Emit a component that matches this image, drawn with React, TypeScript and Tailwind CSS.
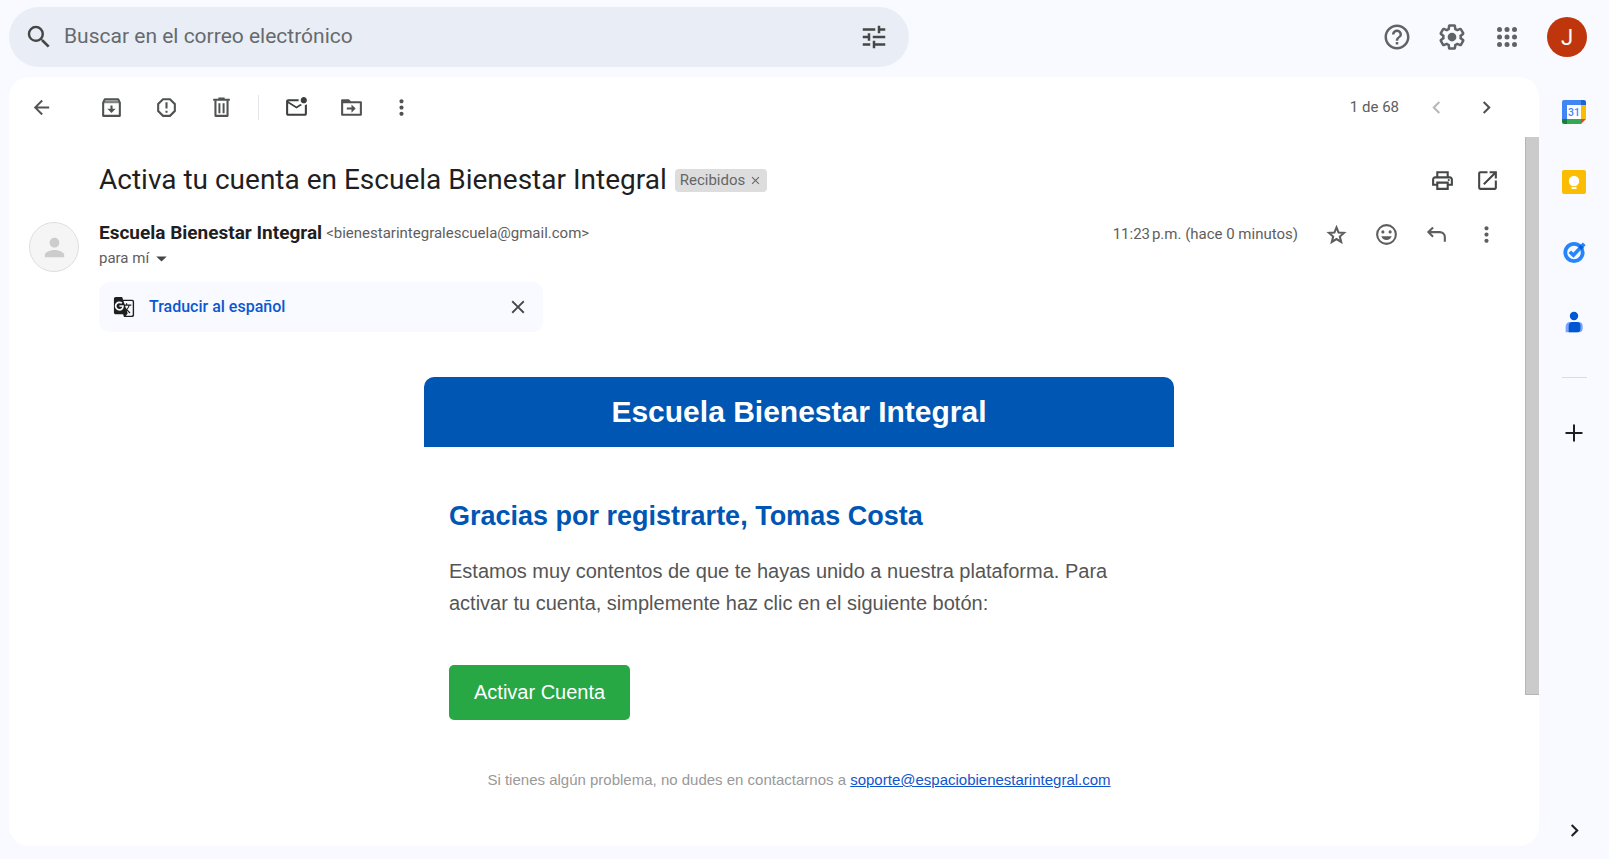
import type { ReactNode } from "react";
import {
  MdArrowBack,
  MdArrowDropDown,
  MdChevronLeft,
  MdChevronRight,
  MdClose,
  MdGTranslate,
  MdHelpOutline,
  MdMoreVert,
  MdOpenInNew,
  MdOutlineMarkEmailUnread,
  MdOutlinePrint,
  MdPerson,
  MdReportGmailerrorred,
  MdSearch,
  MdTune,
} from "react-icons/md";

function IconButton({
  label,
  className = "w-[50px]",
  children,
}: {
  label: string;
  className?: string;
  children: ReactNode;
}) {
  return (
    <button
      type="button"
      aria-label={label}
      className={`flex h-10 shrink-0 items-center justify-center ${className}`}
    >
      {children}
    </button>
  );
}

function GearIcon() {
  return (
    <svg viewBox="0 0 24 24" className="size-[30px]" fill="currentColor">
      <path d="M13.85 22.25h-3.7c-.74 0-1.36-.54-1.45-1.27l-.27-1.89c-.27-.14-.53-.29-.79-.46l-1.8.72c-.7.26-1.47-.03-1.81-.65L2.2 15.53c-.35-.66-.2-1.44.36-1.88l1.53-1.19c-.01-.15-.02-.3-.02-.46 0-.15.01-.31.02-.46l-1.52-1.19c-.59-.45-.74-1.26-.37-1.88l1.85-3.19c.34-.62 1.11-.9 1.79-.63l1.81.73c.26-.17.52-.32.78-.46l.27-1.91c.09-.7.71-1.25 1.44-1.25h3.7c.74 0 1.36.54 1.45 1.27l.27 1.89c.27.14.53.29.79.46l1.8-.72c.71-.26 1.48.03 1.82.65l1.84 3.18c.36.66.2 1.44-.36 1.88l-1.52 1.19c.01.15.02.3.02.46s-.01.31-.02.46l1.52 1.19c.56.45.72 1.23.37 1.86l-1.86 3.22c-.34.62-1.11.9-1.8.63l-1.8-.72c-.26.17-.52.32-.78.46l-.27 1.91c-.1.68-.72 1.22-1.46 1.22zm-3.23-2h2.76l.37-2.55.53-.22c.44-.18.88-.44 1.34-.78l.45-.34 2.38.96 1.38-2.4-2.03-1.58.07-.56c.03-.26.06-.51.06-.78s-.03-.53-.06-.78l-.07-.56 2.03-1.58-1.39-2.4-2.39.96-.45-.35c-.42-.32-.87-.58-1.33-.77l-.52-.22-.37-2.55h-2.76l-.37 2.55-.53.21c-.44.19-.88.44-1.34.79l-.45.33-2.38-.95-1.39 2.39 2.03 1.58-.07.56a7 7 0 0 0-.06.79c0 .26.02.53.06.78l.07.56-2.03 1.58 1.38 2.4 2.39-.96.45.35c.43.33.86.58 1.33.77l.53.22.38 2.55z" />
      <circle cx="12" cy="12" r="3.5" />
    </svg>
  );
}

function AppsIcon() {
  return (
    <svg viewBox="0 0 24 24" className="size-[30px]" fill="currentColor">
      {[6, 12, 18].map((y) => [6, 12, 18].map((x) => <circle key={`${x}-${y}`} cx={x} cy={y} r="2" />))}
    </svg>
  );
}

function ArchiveIcon() {
  return (
    <svg viewBox="0 0 24 24" className="size-[25px]" fill="none" stroke="currentColor" strokeWidth="2">
      <path d="M4 7.300 5.600 4h12.800L20 7.300V20H4z" strokeLinejoin="round" />
      <path d="M4 6.500h16" strokeWidth="2.600" opacity=".7" />
      <path d="M12 10v4.500" />
      <path d="M8 13.300h8l-4 4z" fill="currentColor" stroke="none" />
    </svg>
  );
}

function TrashIcon() {
  return (
    <svg viewBox="0 0 24 24" className="size-[25px]" fill="none" stroke="currentColor" strokeWidth="2">
      <path d="M4 4.500h16M9 3.500h6" />
      <path d="M6.200 5v15h11.600V5" strokeLinejoin="round" />
      <path d="M10 8v9.500M14 8v9.500" strokeWidth="1.900" />
    </svg>
  );
}

function MoveIcon() {
  return (
    <svg viewBox="0 0 24 24" className="size-[25px]" fill="none" stroke="currentColor" strokeWidth="2">
      <path d="M3 5h6l2 2h10v12H3z" strokeLinejoin="round" />
      <path d="M3 5h6l2 2v1H3z" fill="currentColor" stroke="none" />
      <path d="M7.500 13h6" />
      <path d="M12 9l4 4-4 4z" fill="currentColor" stroke="none" />
    </svg>
  );
}

function StarIcon() {
  return (
    <svg viewBox="0 0 24 24" className="size-[25px]" fill="none" stroke="currentColor" strokeWidth="2">
      <path d="M12 5.200l2 4.900 5.200.4-4 3.500 1.300 5.200L12 16.400l-4.500 2.800 1.300-5.200-4-3.500 5.200-.4z" />
    </svg>
  );
}

function PlusIcon() {
  return (
    <svg viewBox="0 0 24 24" className="size-6" fill="none" stroke="currentColor" strokeWidth="2">
      <path d="M12 3.500v17M3.500 12h17" />
    </svg>
  );
}

function SmileIcon() {
  return (
    <svg viewBox="0 0 24 24" className="size-[25px]" fill="currentColor">
      <circle cx="12" cy="12" r="9" fill="none" stroke="currentColor" strokeWidth="2" />
      <circle cx="8.5" cy="9.5" r="1.5" />
      <circle cx="15.5" cy="9.5" r="1.5" />
      <path d="M7 13.6h10c-.7 2.3-2.6 3.7-5 3.7s-4.300-1.400-5-3.700z" />
    </svg>
  );
}

function ReplyIcon() {
  return (
    <svg viewBox="0 0 24 24" className="size-[25px]" fill="none" stroke="currentColor" strokeWidth="2">
      <path d="M8.700 5.200 4.200 9.700l4.500 4.500" />
      <path d="M4.500 9.700H15c2.900 0 5 2.100 5 5V19" />
    </svg>
  );
}

function CalendarIcon() {
  return (
    <svg viewBox="0 0 24 24" className="size-6">
      <path d="M5 5h14v14H5z" fill="#fff" />
      <path d="M2 0h17v5H5v14H0V2C0 .9.9 0 2 0z" fill="#4285f4" />
      <path d="M19 0h3c1.100 0 2 .9 2 2v3h-5z" fill="#1967d2" />
      <path d="M19 5h5v14h-5z" fill="#fbbc04" />
      <path d="M5 19h14v5H5z" fill="#34a853" />
      <path d="M0 19h5v5H2c-1.100 0-2-.9-2-2z" fill="#188038" />
      <path d="M19 19h5l-5 5z" fill="#ea4335" />
      <text
        x="12"
        y="16"
        textAnchor="middle"
        fontSize="10.5"
        fontWeight="500"
        fontFamily="Roboto, sans-serif"
        fill="#4285f4"
      >
        31
      </text>
    </svg>
  );
}

function KeepIcon() {
  return (
    <svg viewBox="0 0 24 24" className="size-6">
      <rect width="24" height="24" rx="2" fill="#fbbc04" />
      <circle cx="12" cy="11" r="5.200" fill="#fff" />
      <path d="M9.500 13h5v3h-5zM9.500 17h5v2h-5z" fill="#fff" />
    </svg>
  );
}

function TasksIcon() {
  return (
    <svg viewBox="0 0 24 24" className="size-6" fill="none">
      <circle cx="12" cy="12.500" r="8.700" stroke="#2684fc" strokeWidth="3.800" />
      <path d="M7.800 11.700l3.600 3.500L20.300 5.800" stroke="#2684fc" strokeWidth="3.600" />
      <path d="M16.600 6.900l2.300-2.400 3 2.700-2.500 2.700z" fill="#0066da" />
      <path d="M18.900 4.500l2-2 2.700 2.700-2 2z" fill="#2684fc" />
    </svg>
  );
}

function ContactsIcon() {
  return (
    <svg viewBox="0 0 24 24" className="size-6">
      <circle cx="12" cy="6" r="4.200" fill="#0057d2" />
      <path d="M8 12h8.500c2.500 0 4.200 1.600 4.200 4v2.500c0 2.200-1.300 3.700-3.700 3.700H3.600V17c0-3 1.500-5 4.400-5z" fill="#7aa5fb" />
      <path d="M10.500 12h5c1.900 0 2.900 1.300 2.900 3.200v3.600c0 2-1 3.400-2.900 3.400H6.700V16c0-2.500 1.400-4 3.800-4z" fill="#0057d2" />
    </svg>
  );
}

function Header() {
  return (
    <header className="flex h-[77px] items-start justify-between pt-[7px] pr-[22px] pl-[9px]">
      <form role="search" className="flex h-[60px] w-[900px] items-center rounded-full bg-[#e9eef6] pr-[15px] pl-[10px] text-[#444746]">
        <IconButton label="Buscar" className="w-[40px]">
          <MdSearch className="size-[30px]" />
        </IconButton>
        <input
          type="text"
          aria-label="Buscar en el correo electrónico"
          placeholder="Buscar en el correo electrónico"
          className="min-w-0 flex-1 bg-transparent pl-[5px] text-[21px] outline-none placeholder:text-[#666a6d]"
        />
        <IconButton label="Mostrar opciones de búsqueda" className="w-[40px]">
          <MdTune className="size-[30px]" />
        </IconButton>
      </form>
      <div className="flex h-[60px] items-center text-[#5f6368]">
        <IconButton label="Asistencia" className="w-[55px]">
          <MdHelpOutline className="size-[30px]" />
        </IconButton>
        <IconButton label="Configuración" className="w-[55px]">
          <GearIcon />
        </IconButton>
        <IconButton label="Aplicaciones de Google" className="w-[55px]">
          <AppsIcon />
        </IconButton>
        <button
          type="button"
          aria-label="Cuenta de Google"
          className="ml-[13px] size-10 rounded-full bg-[#bf360c] text-[22px] text-white"
        >
          J
        </button>
      </div>
    </header>
  );
}

function Toolbar() {
  return (
    <div className="flex h-[60px] items-center pr-[28px] text-[#505352]">
      <IconButton label="Volver a Recibidos" className="mr-[11px] w-[64px]">
        <MdArrowBack className="size-[23px]" />
      </IconButton>
      <IconButton label="Archivar" className="w-[55px]">
        <ArchiveIcon />
      </IconButton>
      <IconButton label="Marcar como spam" className="w-[55px]">
        <MdReportGmailerrorred className="size-[25px]" />
      </IconButton>
      <IconButton label="Eliminar" className="w-[55px]">
        <TrashIcon />
      </IconButton>
      <div className="mr-[10px] ml-[9px] h-[25px] w-px bg-[#e3e7ed]" />
      <IconButton label="Marcar como no leído" className="w-[55px] text-[#3c3f3e]">
        <MdOutlineMarkEmailUnread className="size-[25px]" />
      </IconButton>
      <IconButton label="Mover a" className="w-[55px]">
        <MoveIcon />
      </IconButton>
      <IconButton label="Más" className="w-[45px]">
        <MdMoreVert className="size-[25px]" />
      </IconButton>
      <span className="mr-[12px] ml-auto text-[15px] text-[#5e5e5e]">1 de 68</span>
      <IconButton label="Más reciente">
        <MdChevronLeft className="size-[25px] text-[#b7b9b8]" />
      </IconButton>
      <IconButton label="Anterior">
        <MdChevronRight className="size-[25px]" />
      </IconButton>
    </div>
  );
}

function SubjectRow() {
  return (
    <div className="mt-[13px] flex h-[60px] items-center pr-[15px] pl-[90px] text-[#444746]">
      <h1 className="text-[28px] text-[#1f1f1f]">Activa tu cuenta en Escuela Bienestar Integral</h1>
      <span className="ml-[8px] flex h-[23px] items-center gap-[4px] rounded bg-[#ddd] px-[5px] text-[15px] text-[#666]">
        Recibidos
        <button type="button" aria-label="Quitar la etiqueta Recibidos">
          <MdClose className="size-[13px]" />
        </button>
      </span>
      <div className="ml-auto flex">
        <IconButton label="Imprimir todo" className="w-[45px]">
          <MdOutlinePrint className="size-[25px]" />
        </IconButton>
        <IconButton label="Abrir en una ventana nueva" className="w-[45px]">
          <MdOpenInNew className="size-[25px]" />
        </IconButton>
      </div>
    </div>
  );
}

function SenderRow() {
  return (
    <div className="mt-[12px] flex h-[50px] items-start pr-[14px] pl-[20px] text-[15px] text-[#5e5e5e]">
      <div className="flex size-[50px] shrink-0 items-center justify-center rounded-full border border-[#dedede] bg-[#f5f5f5]">
        <MdPerson className="size-[29px] text-[#ccc]" />
      </div>
      <div className="ml-[20px]">
        <div className="flex h-[22px] items-center gap-[4px]">
          <span className="text-[19px] leading-[22px] font-bold text-[#1f1f1f]">Escuela Bienestar Integral</span>
          <span>&lt;bienestarintegralescuela@gmail.com&gt;</span>
        </div>
        <div className="flex h-[28px] items-center">
          para mí
          <button type="button" aria-label="Mostrar detalles">
            <MdArrowDropDown className="size-[25px] text-[#444746]" />
          </button>
        </div>
      </div>
      <div className="ml-auto flex h-[24px] items-center">
        <span className="mr-[13px]">11:23{"\u202f"}p.m. (hace 0 minutos)</span>
        <IconButton label="Destacar">
          <StarIcon />
        </IconButton>
        <IconButton label="Agregar reacción">
          <SmileIcon />
        </IconButton>
        <IconButton label="Responder">
          <ReplyIcon />
        </IconButton>
        <IconButton label="Más opciones">
          <MdMoreVert className="size-[25px]" />
        </IconButton>
      </div>
    </div>
  );
}

function TranslateBar() {
  return (
    <div className="mt-[10px] ml-[90px] flex h-[50px] w-[444px] items-center rounded-[10px] bg-[#f8faff] pl-[14px]">
      <MdGTranslate className="size-[22px] text-[#1f1f1f]" />
      <button type="button" className="ml-[14px] text-[16px] font-medium text-[#0b57d0]">
        Traducir al español
      </button>
      <IconButton label="Cerrar" className="ml-auto w-[50px] text-[#444746]">
        <MdClose className="size-[22px]" />
      </IconButton>
    </div>
  );
}

function EmailBody() {
  return (
    <div className="mt-[45px] pr-[26px] pl-[90px] font-['Liberation_Sans',Arial,sans-serif]">
      <article className="mx-auto max-w-[750px]">
        <div className="flex h-[70px] items-center justify-center rounded-t-[10px] bg-[#0056b3] pb-[2px] text-[30px] font-bold text-white">
          Escuela Bienestar Integral
        </div>
        <div className="px-[25px] pt-[51px] text-[20px] leading-[32px] text-[#555]">
          <h2 className="text-[27px] leading-[36px] font-bold text-[#0056b3]">
            Gracias por registrarte, Tomas Costa
          </h2>
          <p className="mt-[21px]">
            Estamos muy contentos de que te hayas unido a nuestra plataforma. Para activar tu cuenta, simplemente
            haz clic en el siguiente botón:
          </p>
          <a
            href="#activar"
            className="mt-[46px] inline-flex h-[55px] items-center rounded-[5px] bg-[#28a745] px-[25px] pb-[2px] text-white"
          >
            Activar Cuenta
          </a>
        </div>
        <p className="mt-[48px] text-center text-[15px] leading-[24px] text-[#999]">
          Si tienes algún problema, no dudes en contactarnos a{" "}
          <a href="mailto:soporte@espaciobienestarintegral.com" className="text-[#1155cc] underline">
            soporte@espaciobienestarintegral.com
          </a>
        </p>
      </article>
    </div>
  );
}

function SidePanel() {
  return (
    <aside className="flex w-[70px] shrink-0 flex-col items-center pt-[15px] pb-[9px] text-[#1f1f1f]">
      <div className="flex flex-col gap-[30px]">
        <IconButton label="Calendar">
          <CalendarIcon />
        </IconButton>
        <IconButton label="Keep">
          <KeepIcon />
        </IconButton>
        <IconButton label="Tasks">
          <TasksIcon />
        </IconButton>
        <IconButton label="Contactos">
          <ContactsIcon />
        </IconButton>
      </div>
      <div className="mt-[35px] mb-[35px] h-px w-[25px] bg-[#dadce0]" />
      <IconButton label="Obtener complementos">
        <PlusIcon />
      </IconButton>
      <IconButton label="Ocultar panel lateral" className="mt-auto w-[50px]">
        <MdChevronRight className="size-[25px]" />
      </IconButton>
    </aside>
  );
}

export default function App() {
  return (
    <div className="flex min-h-screen flex-col bg-[#f8faff] font-[Roboto,sans-serif]">
      <Header />
      <div className="flex flex-1">
        <main className="mb-[13px] ml-[9px] flex min-w-0 flex-1 flex-col overflow-hidden rounded-[20px] bg-white">
          <Toolbar />
          <div className="flex flex-1">
            <section className="min-w-0 flex-1">
              <SubjectRow />
              <SenderRow />
              <TranslateBar />
              <EmailBody />
            </section>
            <div className="h-[558px] w-[14px] border-b border-l border-[#b5b5b5] bg-[#cbcbcb]" />
          </div>
        </main>
        <SidePanel />
      </div>
    </div>
  );
}
